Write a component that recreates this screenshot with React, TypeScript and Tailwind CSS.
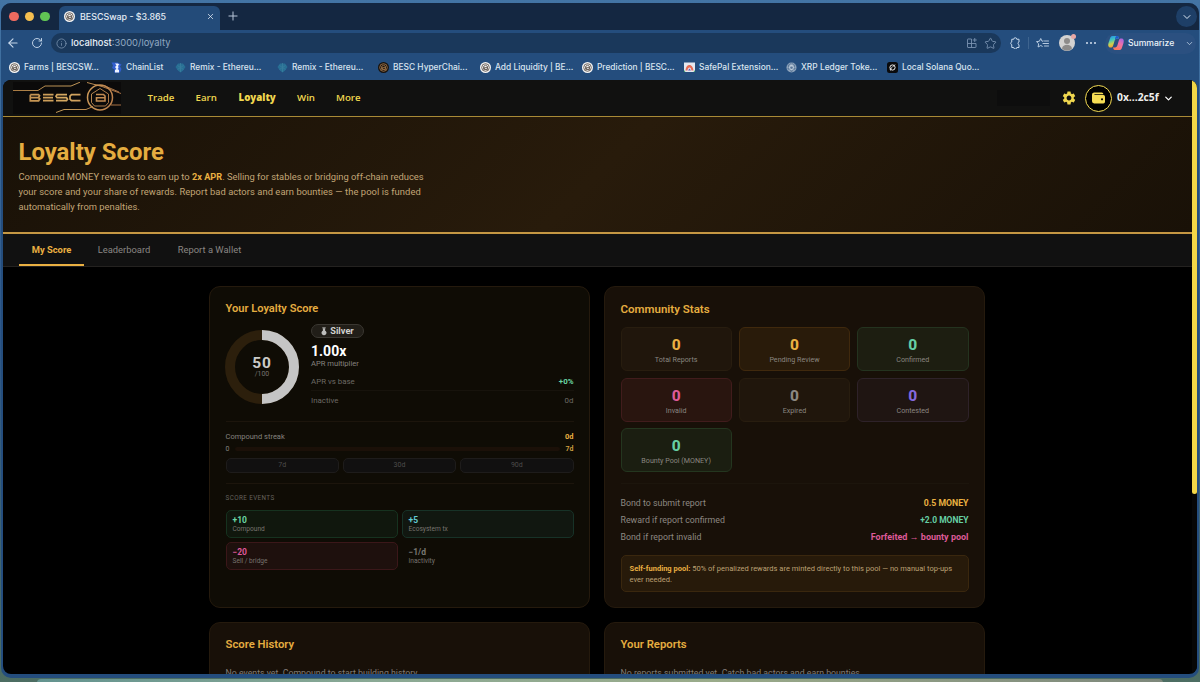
import * as React from 'react';
import { ArrowLeft, ChevronDown, Info, Plus, RotateCw, Star, X } from 'lucide-react';
import { MdSettings } from 'react-icons/md';

type BookmarkKind = 'besc' | 'chain' | 'remix' | 'bescDark' | 'safepal' | 'xrp' | 'solana';

const bookmarks: { label: string; kind: BookmarkKind; width: string }[] = [
  { label: 'Farms | BESCSW...', kind: 'besc', width: 'w-[102px]' },
  { label: 'ChainList', kind: 'chain', width: 'w-[64px]' },
  { label: 'Remix - Ethereu...', kind: 'remix', width: 'w-[102px]' },
  { label: 'Remix - Ethereu...', kind: 'remix', width: 'w-[101px]' },
  { label: 'BESC HyperChai...', kind: 'bescDark', width: 'w-[102px]' },
  { label: 'Add Liquidity | BE...', kind: 'besc', width: 'w-[102px]' },
  { label: 'Prediction | BESC...', kind: 'besc', width: 'w-[102px]' },
  { label: 'SafePal Extension...', kind: 'safepal', width: 'w-[102px]' },
  { label: 'XRP Ledger Toke...', kind: 'xrp', width: 'w-[101px]' },
  { label: 'Local Solana Quo...', kind: 'solana', width: 'w-[102px]' },
];

const navItems = [
  { label: 'Trade', style: 'w-[27px] font-semibold' },
  { label: 'Earn', style: 'w-[22px] font-semibold' },
  { label: 'Loyalty', style: 'w-[37.5px] font-extrabold' },
  { label: 'Win', style: 'w-[18px] font-semibold' },
  { label: 'More', style: 'w-[25px] font-semibold' },
];

const stats = [
  { label: 'Total Reports', color: 'text-[#eab042]', box: 'bg-[#20160c] border-[#281d0f]' },
  { label: 'Pending Review', color: 'text-[#eab042]', box: 'bg-[#291b0a] border-[#40290d]' },
  { label: 'Confirmed', color: 'text-[#66cfa4]', box: 'bg-[#1d1e11] border-[#24331f]' },
  { label: 'Invalid', color: 'text-[#de5a98]', box: 'bg-[#29150f] border-[#411c1c]' },
  { label: 'Expired', color: 'text-[#8b8781]', box: 'bg-[#20160c] border-[#281d0f]' },
  { label: 'Contested', color: 'text-[#8468dc]', box: 'bg-[#1f1512] border-[#2e2229]' },
  { label: 'Bounty Pool (MONEY)', color: 'text-[#66cfa4]', box: 'bg-[#1b1e11] border-[#24361f]' },
];

const bondRows = [
  { label: 'Bond to submit report', value: '0.5 MONEY', color: 'text-[8.7px] text-[#eab042]' },
  { label: 'Reward if report confirmed', value: '+2.0 MONEY', color: 'text-[8.5px] text-[#66cfa4]' },
  { label: 'Bond if report invalid', value: 'Forfeited → bounty pool', color: 'text-[9px] text-[#de5a98]' },
];

const scoreEvents = [
  { value: '+10', label: 'Compound', color: 'text-[#6bd6a4]', box: 'bg-[#10170d] border-[#16321f]' },
  { value: '+5', label: 'Ecosystem tx', color: 'text-[#62cbd0]', box: 'bg-[#111710] border-[#173227]' },
  { value: '−20', label: 'Sell / bridge', color: 'text-[#df5899]', box: 'bg-[#1e100d] border-[#3b1719]' },
  { value: '−1/d', label: 'Inactivity', color: 'text-[#7a7874]', box: 'border-transparent' },
];

function BescMark({ dark = false }: { dark?: boolean }) {
  const line = dark ? '#a77a4c' : '#574b43';
  return (
    <svg viewBox="0 0 24 24" className="size-[11px] shrink-0" fill="none">
      <circle cx="12" cy="12" r="12" fill={dark ? '#17130f' : '#f4f4f4'} />
      <circle cx="12" cy="12" r="8.3" stroke={line} strokeWidth="1.8" />
      <path d="M8 16.5V9.5l4-2.500 4.200 2.500v7H9.500v-4h6" stroke={line} strokeWidth="2" />
    </svg>
  );
}

function BookmarkIcon({ kind }: { kind: BookmarkKind }) {
  if (kind === 'besc') return <BescMark />;
  if (kind === 'bescDark') return <BescMark dark />;
  return (
    <svg viewBox="0 0 22 22" className="size-[11px] shrink-0" fill="none">
      {kind === 'chain' && (
        <>
          <path d="M1 1h12l4 2 4 2-3 4 3 5-3 7H6l1-6-5-3 2-5z" fill="#335fd0" />
          <path d="M8 3h6l3 3-3 1 1 5-2 2 3 2v5H8v-5l3-2-3-4 3-3z" fill="#eef3ff" />
        </>
      )}
      {kind === 'remix' && (
        <>
          <path d="M6 3h10l5 7-5 7-5 4-5-4-5-7z" fill="#286f94" />
          <path d="M11 2v18M5 7l6 4 6-4M5 15l6-4 6 4" stroke="#3a7f9d" strokeWidth="1.5" />
        </>
      )}
      {kind === 'safepal' && (
        <>
          <path d="M0 1h22v19H0z" fill="#e4e7ef" />
          <path d="M3 17c1-9 5-11 8-11s7 3 8 11h-4c-1-5-3-6-4-6s-4 2-4 6z" fill="#e66a55" />
          <path d="M8 17l3-4 3 4z" fill="#6256bd" />
          <path d="M0 16l3 4H0zM22 16l-3 4h3z" fill="#46a56b" />
        </>
      )}
      {kind === 'xrp' && (
        <>
          <circle cx="11" cy="11" r="10" fill="#8da2ba" />
          <path d="M11 2l7 5-7 13L4 7zM3 13h16M4 7l14 8M18 7L4 15" stroke="#4b6b8f" strokeWidth="1.2" />
          <circle cx="11" cy="11" r="4" stroke="#dae4ee" strokeWidth="1.500" />
        </>
      )}
      {kind === 'solana' && (
        <>
          <rect width="22" height="22" rx="5" fill="#0a0a0c" />
          <circle cx="11" cy="11" r="5.2" stroke="#fff" strokeWidth="1.8" />
          <path d="M7 17c-2-1 1-5 3-6l6-6" stroke="#fff" strokeWidth="1.6" />
        </>
      )}
    </svg>
  );
}

function CopilotIcon() {
  return (
    <svg viewBox="0 0 32 32" className="size-[16px]">
      <defs>
        <linearGradient id="cpLeft" x1="0" y1="0" x2="0.3" y2="1">
          <stop offset="0" stopColor="#2588ee" />
          <stop offset="0.4" stopColor="#40c7bd" />
          <stop offset="0.72" stopColor="#c9d34d" />
          <stop offset="1" stopColor="#f39a38" />
        </linearGradient>
        <linearGradient id="cpRight" x1="1" y1="0" x2="0.4" y2="1">
          <stop offset="0" stopColor="#9a62ec" />
          <stop offset="0.5" stopColor="#ef70a8" />
          <stop offset="1" stopColor="#fb795c" />
        </linearGradient>
      </defs>
      <path d="M10 2h8c3 0 3 2 4 5h-4c-3 0-4 2-5 5l-3 10c-1 3-2 3-5 3-5 0-5-5-4-9l3-9c1-4 3-5 6-5z" fill="url(#cpLeft)" />
      <path d="M18 2c3 0 3 2 4 5h-4c-2 0-3 1-4 3 0-4 1-8 4-8z" fill="#1f55cd" />
      <path d="M22 30h-8c-3 0-3-2-4-5h4c3 0 4-2 5-5l3-10c1-3 2-3 5-3 5 0 5 5 4 9l-3 9c-1 4-3 5-6 5z" fill="url(#cpRight)" />
    </svg>
  );
}

function TabStrip() {
  return (
    <div className="flex h-[27px] items-end bg-[#142741]">
      <div className="flex h-full w-[58px] items-center gap-[6px] pl-[8px]">
        <span className="size-[9.5px] rounded-full bg-[#ec6a5f]" />
        <span className="size-[9.5px] rounded-full bg-[#f5bf4f]" />
        <span className="size-[9.5px] rounded-full bg-[#61c454]" />
      </div>
      <div className="flex h-[24px] w-[161px] items-center rounded-t-[6px] bg-[#234b79] pb-[3px] pl-[5px] pr-[5px] text-[8.9px] font-medium text-[#e4ebf4]">
        <BescMark />
        <span className="ml-[5px] whitespace-nowrap">BESCSwap - $3.865</span>
        <X className="ml-auto size-[9px]" />
      </div>
      <Plus className="mb-[7px] ml-[6px] size-[14px] text-[#b9c8da]" strokeWidth={1.7} />
      <span className="mb-[3px] ml-auto mr-[2px] flex size-[21px] items-center justify-center rounded-full bg-[#1e3f67]">
        <ChevronDown className="size-[12px] text-[#dce7f3]" />
      </span>
    </div>
  );
}

function Toolbar() {
  return (
    <div className="flex h-[26px] items-center text-[#c6d7ea]">
      <ArrowLeft className="ml-[5px] size-[14px]" strokeWidth={1.9} />
      <RotateCw className="ml-[11px] size-[12px]" strokeWidth={1.9} />
      <div className="ml-[8px] flex h-[20px] w-[950px] shrink-0 items-center rounded-full bg-[#1a385b] pl-[5px] pr-[4px]">
        <Info className="size-[11px] text-[#7e97b3]" strokeWidth={1.7} />
        <span className="ml-[4px] pt-px text-[9.4px] text-[#91a8c1]">
          <span className="font-medium text-[#e9f0f8]">localhost</span>:3000/loyalty
        </span>
        <svg viewBox="0 0 24 24" className="ml-auto size-[12px] text-[#7992b0]" fill="none" stroke="currentColor" strokeWidth="1.8">
          <path d="M11 4H4a1 1 0 0 0-1 1v15a1 1 0 0 0 1 1h15a1 1 0 0 0 1-1v-7H3M11 4v17M17.500 2v8M13.500 6h8" />
        </svg>
        <Star className="ml-[6px] size-[13px] text-[#7992b0]" strokeWidth={1.7} />
      </div>
      {/* extensions */}
      <svg viewBox="0 0 24 24" className="ml-[8px] size-[12px] shrink-0" fill="none" stroke="currentColor" strokeWidth="2" strokeLinejoin="round">
        <path d="M5.500 4.500h4a3 3 0 0 1 6 0h4.500v5.500a2.900 2.900 0 0 0 0 5.500V21h-4.500a3 3 0 0 1-6 0h-4v-5.500a3 3 0 0 1 0-5.700z" />
      </svg>
      <span className="ml-[7px] h-[12px] w-px bg-[#3e648f]" />
      <svg viewBox="0 0 26 24" className="ml-[7px] h-[12px] w-[13px] shrink-0" fill="none" stroke="currentColor" strokeWidth="1.8" strokeLinecap="round" strokeLinejoin="round">
        <path d="M14.500 8 12 8.500 9.500 3 6.800 8.500 1 9.300l4.300 4.200L4.200 20l5.300-3 3 1.600M17 8h8M14 13h11M17 18h8" />
      </svg>
      <span className="relative ml-[10px] flex size-[16px] shrink-0 items-end justify-center rounded-full bg-[#d3d2d1]">
        <svg viewBox="0 0 32 32" className="size-[16px]" fill="#8d8b8a">
          <circle cx="16" cy="12" r="6" />
          <path d="M6 27c1-10 19-10 20 0-6 6-14 6-20 0z" />
        </svg>
        <span className="absolute -right-[1px] -top-[1px] size-[5px] rounded-full bg-[#e8a8a6]" />
      </span>
      <span className="ml-[11px] flex gap-[2px]">
        <i className="size-[2px] rounded-full bg-[#d5e1ef]" />
        <i className="size-[2px] rounded-full bg-[#d5e1ef]" />
        <i className="size-[2px] rounded-full bg-[#d5e1ef]" />
      </span>
      <div className="ml-[9px] flex h-[21px] w-[91px] shrink-0 items-center rounded-full bg-[#2b5080] pl-[3px]">
        <CopilotIcon />
        <span className="ml-[4px] pt-px text-[8.6px] font-medium text-[#edf3fa]">Summarize</span>
        <ChevronDown className="ml-auto mr-[2px] size-[9px]" />
      </div>
    </div>
  );
}

function Bookmarks() {
  return (
    <div className="flex h-[24px] items-center pl-[8px] pb-[1px] text-[8.4px] font-medium text-[#dbe5f0]">
      {bookmarks.map((item, index) => (
        <div key={index} className={`${item.width} flex shrink-0 items-center gap-[4px] whitespace-nowrap`}>
          <BookmarkIcon kind={item.kind} />
          <span>{item.label}</span>
        </div>
      ))}
    </div>
  );
}

function Logo() {
  return (
    <svg viewBox="0 0 108 32" className="h-[32px] w-[108px]" fill="none">
      <defs>
        <linearGradient id="gold" gradientUnits="userSpaceOnUse" x1="0" y1="0" x2="108" y2="20">
          <stop offset="0" stopColor="#b98548" />
          <stop offset="0.5" stopColor="#d6aa62" />
          <stop offset="1" stopColor="#b67848" />
        </linearGradient>
      </defs>
      <rect width="108" height="32" fill="#0b0a0a" />
      <g stroke="url(#gold)" strokeWidth="1">
        <path d="M0 8.500h25l7-4.500h26l9-3.800M74 .5l15 4 19 7M43 30.500l8-3h22l7-3M98 23h10M82 3l10 1 14 6" strokeWidth="0.9" />
        <circle cx="87" cy="15.500" r="12.500" strokeWidth="1.500" />
        <path d="M78.500 12l8.500-5.500 8.500 5.500v8.500l-3 3.500h-11l-3-3.500z" strokeWidth="0.9" />
        <path d="M83 12.500h7.500l1.500 1.500v5h-8.500v-3.300h8" strokeWidth="1.600" />
        <path
          d="M17.300 12.700h8.200l1 1-1 1.900h-8M25.500 15.600l1.300 1.200-1.200 2h-8.300v-6M30 12.700h10.500M30 15.700h10M30 18.700h10.500M54 12.700H44l-1 1.500 1 1.500h9.500l1 1.500-1 1.500H43M67.500 12.700h-9l-1.500 1.500v3l1.500 1.500h9"
          strokeWidth="1.700"
        />
      </g>
    </svg>
  );
}

function SiteNav() {
  return (
    <header className="flex h-[37px] shrink-0 items-center border-b border-[#a98a36] bg-[#111110] pl-[10px] font-['Open_Sans',sans-serif] text-[#f0d74f]">
      <Logo />
      <nav className="ml-[26.5px] flex gap-[21px] text-[9.7px]">
        {navItems.map((item) => (
          <a key={item.label} className={`${item.style} whitespace-nowrap`}>
            {item.label}
          </a>
        ))}
      </nav>
      <div className="ml-auto flex items-center pr-[18px]">
        <span className="mr-[11px] h-[16px] w-[53px] bg-[#0d0d0d]" />
        <MdSettings className="size-[16px]" />
        <span className="ml-[8px] flex size-[27px] items-center justify-center rounded-full border-[1.5px] border-[#f5dc54] bg-black">
          <svg viewBox="0 0 24 22" className="h-[12px] w-[13px]" fill="#f5dc54">
            <path fillRule="evenodd" d="M4 1h14a3 3 0 0 1 3 3H4.500v1.500H21a3 3 0 0 1 3 3V18a3 3 0 0 1-3 3H4a4 4 0 0 1-4-4V5a4 4 0 0 1 4-4zm14.500 10.500a2 2 0 1 0 0 4 2 2 0 0 0 0-4z" />
          </svg>
        </span>
        <span className="ml-[5px] w-[41px] whitespace-nowrap text-[10.3px] font-bold text-[#eeeeec]">0x...2c5f</span>
        <ChevronDown className="ml-[5px] size-[11px] text-white" strokeWidth={2.8} />
      </div>
    </header>
  );
}

function Hero() {
  return (
    <section className="h-[117px] shrink-0 border-b-2 border-[#c59743] bg-[linear-gradient(135deg,#191107_0%,#281b0b_50%,#191107_100%)] pl-[15.5px] pt-[20px]">
      <h1 className="h-[31px] text-[23.9px] font-bold leading-[31px] text-[#e5ad40]">Loyalty Score</h1>
      <p className="relative top-[0.5px] w-[420px] text-[9.4px] leading-[15px] text-[#c2a677]">
        Compound MONEY rewards to earn up to <b className="text-[9.2px] text-[#eab042]">2x APR</b>. Selling for stables or bridging off-chain reduces
        <br />
        <span className="tracking-[0.006em]">your score and your share of rewards. Report bad actors and earn bounties — the pool is funded</span>
        <br />
        automatically from penalties.
      </p>
    </section>
  );
}

function PageTabs() {
  return (
    <div className="flex h-[33px] shrink-0 border-b border-[#242220] bg-[#111111] pl-[16px] text-[9.4px] text-[#898683]">
      <span className="w-[65px] border-b-2 border-[#eab042] text-center font-bold leading-[32px] text-[#eab042]">My Score</span>
      <span className="w-[80px] text-center leading-[32px]">Leaderboard</span>
      <span className="w-[91px] text-center leading-[32px]">Report a Wallet</span>
    </div>
  );
}

function CardTitle({ children }: { children: React.ReactNode }) {
  return <h2 className="h-4 text-[11.1px] font-semibold leading-[17px] text-[#e5ad40]">{children}</h2>;
}

function Divider({ className }: { className: string }) {
  return <div className={`${className} h-px bg-[#1c150c]`} />;
}

function ScoreCard() {
  return (
    <section className="h-[322px] rounded-[11px] border border-[#251a0d] bg-[#0f0c05] px-[15.5px] pt-[13px]">
      <CardTitle>Your Loyalty Score</CardTitle>
      <div className="mt-2 flex h-[85px] items-center">
        <div className="relative -ml-[0.5px] size-[74px] shrink-0">
          <svg viewBox="0 0 74 74" fill="none" className="size-[74px]">
            <circle cx="37" cy="37" r="32" stroke="#2c1f0c" strokeWidth="10" />
            <path d="M37 5a32 32 0 0 1 0 64" stroke="#c5c5c5" strokeWidth="10" />
          </svg>
          <div className="absolute inset-0 flex flex-col items-center justify-center pt-[1px] text-center">
            <span className="text-[15.5px] font-bold leading-[14px] tracking-[0.06em] text-[#cbcac8]">50</span>
            <span className="text-[6.9px] leading-[8px] text-[#777470]">/100</span>
          </div>
        </div>
        <div className="ml-[12px] flex-1">
          <div className="flex h-[14.5px] w-[53px] items-center justify-center gap-[3px] rounded-full border border-[#3a3731] bg-[#211e18] text-[9.2px] font-bold text-[#d0d0ce]">
            <svg viewBox="0 0 12 18" className="h-[9px] w-[6px]" fill="#bdbdbb">
              <path d="M3 0h2l1 5 1-5h2L8 7a5 5 0 1 1-4 0z" />
            </svg>
            Silver
          </div>
          <div className="mt-[5px] h-4 text-[14px] font-bold leading-[17px] text-white">1.00x</div>
          <div className="h-[8px] text-[7.6px] leading-[9px] text-[#85827e]">APR multiplier</div>
          <div className="mt-[6px] flex h-[18px] items-center justify-between border-b border-[#17130c] pt-px text-[7.9px] text-[#6c6964]">
            APR vs base
            <b className="text-[7.9px] text-[#6bd6a4]">+0%</b>
          </div>
          <div className="flex h-[18px] items-center justify-between pt-px text-[7.9px] text-[#6c6964]">
            Inactive
            <span>0d</span>
          </div>
        </div>
      </div>
      <Divider className="mt-[12px]" />
      <div className="mt-[8px] flex h-[12px] items-center justify-between pt-px text-[7.5px] text-[#85827e]">
        Compound streak
        <b className="text-[#eab042]">0d</b>
      </div>
      <div className="mt-[2px] flex h-[10px] items-center text-[7px] text-[#85827e]">
        0
        <span className="ml-[6px] mr-[6px] h-[4px] flex-1 rounded-full bg-[#1b1008]" />
        <span className="font-semibold text-[#d6a342]">7d</span>
      </div>
      <div className="mt-[4px] grid h-[15px] grid-cols-3 gap-[4px] text-[7px] text-[#4d4c4b]">
        {['7d', '30d', '90d'].map((label) => (
          <span key={label} className="flex items-center justify-center rounded-[5px] border border-[#1e1c1b] bg-[#111010]">
            {label}
          </span>
        ))}
      </div>
      <Divider className="mt-[10px]" />
      <div className="mt-[9px] h-[10px] text-[6.3px] leading-[10px] tracking-[0.065em] text-[#65625d]">SCORE EVENTS</div>
      <div className="mt-[7px] grid grid-cols-2 gap-[4px]">
        {scoreEvents.map((event) => (
          <div key={event.label} className={`${event.box} h-[28px] rounded-[5px] border px-[6px] pt-[4px]`}>
            <div className={`${event.color} text-[8.5px] font-bold leading-[11px]`}>{event.value}</div>
            <div className="text-[6.6px] leading-[7px] text-[#77736e]">{event.label}</div>
          </div>
        ))}
      </div>
    </section>
  );
}

function CommunityCard() {
  return (
    <section className="h-[322px] rounded-[11px] border border-[#251a0d] bg-[#181008] px-[15.5px] pt-[13px]">
      <h2 className="h-4 text-[11.5px] font-semibold leading-[18px] text-[#e5ad40]">Community Stats</h2>
      <div className="mt-[11px] grid grid-cols-3 gap-x-[7px] gap-y-[6.500px]">
        {stats.map((stat) => (
          <div key={stat.label} className={`${stat.box} h-[44px] rounded-[6px] border pt-[9px] text-center`}>
            <div className={`${stat.color} text-[15.5px] font-extrabold leading-[17px]`}>0</div>
            <div className="text-[7.15px] leading-[11px] text-[#8a8680]">{stat.label}</div>
          </div>
        ))}
      </div>
      <Divider className="mt-[11px]" />
      <div className="mt-[11px] text-[8.8px] leading-[17px] text-[#8d8882]">
        {bondRows.map((row) => (
          <div key={row.label} className="flex justify-between">
            {row.label}
            <b className={row.color}>{row.value}</b>
          </div>
        ))}
      </div>
      <div className="mt-[9px] h-[37px] whitespace-nowrap rounded-[5px] border border-[#3a270e] bg-[#271a0a] px-[8px] pt-[7px] text-[7.52px] leading-[11px] text-[#bda174]">
        <b className="text-[#eab042]">Self-funding pool:</b> 50% of penalized rewards are minted directly to this pool — no manual top-ups
        <br />
        ever needed.
      </div>
    </section>
  );
}

function EmptyCard({ title, text }: { title: string; text: string }) {
  return (
    <section className="h-[120px] rounded-[11px] border border-[#251a0d] bg-[#181008] px-[15.5px] pt-[13px]">
      <h2 className="h-4 text-[11.3px] font-semibold leading-[18px] text-[#e5ad40]">{title}</h2>
      <p className="mt-[14px] text-[8.75px] leading-[14px] text-[#827d76]">{text}</p>
    </section>
  );
}

export default function App() {
  return (
    <div className="h-[682px] w-[1200px] overflow-hidden bg-[linear-gradient(180deg,#4374a4_0%,#2c5688_50%,#4c6d62_100%)] px-px pt-[3px] font-['Inter',sans-serif]">
      <div className="flex h-[675px] flex-col overflow-hidden rounded-[10px] bg-[#244d7d]">
        <TabStrip />
        <Toolbar />
        <Bookmarks />
        <div className="ml-[2px] mr-[2px] flex h-[594px] overflow-hidden rounded-[8px] bg-black font-['Roboto',sans-serif]">
          <main className="flex w-[1189px] shrink-0 flex-col overflow-hidden">
            <SiteNav />
            <Hero />
            <PageTabs />
            <div className="grid grid-cols-[381px_381px] gap-[14px] pl-[206px] pt-[19px]">
              <ScoreCard />
              <CommunityCard />
              <EmptyCard title="Score History" text="No events yet. Compound to start building history." />
              <EmptyCard title="Your Reports" text="No reports submitted yet. Catch bad actors and earn bounties." />
            </div>
          </main>
          <div className="flex-1 bg-[#060606]">
            <div className="h-[414px] rounded-b-[3px] rounded-tr-[5px] bg-[#f3d747]" />
          </div>
        </div>
      </div>
      {/* dock edge peeking out below the window */}
      <div className="mx-[36px] mt-px h-[4px] rounded-t-[4px] bg-[linear-gradient(90deg,#63938f,#8aa995_30%,#9aab8a_60%,#7d877b)]" />
    </div>
  );
}
